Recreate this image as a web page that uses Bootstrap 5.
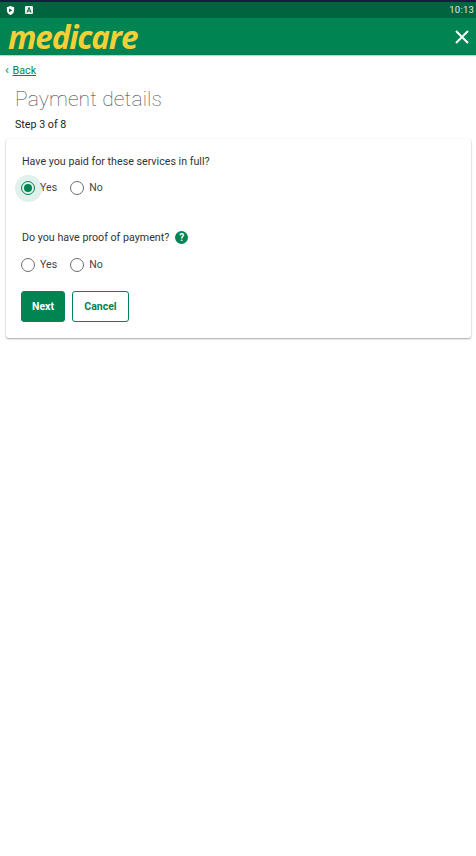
<!DOCTYPE html>
<html lang="en"><head><meta charset="utf-8">
<link rel="stylesheet" href="https://cdn.jsdelivr.net/npm/bootstrap@5.3.0/dist/css/bootstrap.min.css">
<style>
html,body{height:856px;overflow:hidden;background:#fff}
body{font-family:Roboto,sans-serif;font-size:10.7px;color:#2b2b2b;border-top:2px solid #1c1b3a}
.stat-bar{height:16px;background:#00643f;color:#dfeee8;padding:0 2px 0 6px;font-size:9.5px;letter-spacing:.2px}
.stat-a{margin-left:10px}
.app-head{height:37px;background:#008552;padding:0 6px 0 8px;box-shadow:0 1px 1px rgba(0,0,0,.2)}
.brand-word{font-family:"Open Sans",sans-serif;font-weight:700;font-style:italic;font-size:31.5px;line-height:37px;color:#f4cf37;letter-spacing:-1.2px}
.back-row{padding:8px 0 0 5px;height:30px;font-size:10.7px;line-height:15px;color:#008552}
.back-row a{color:#008552;margin-left:1px}
.back-mark{font-size:13px;line-height:13px}
.page-h{font-weight:100;font-size:21px;line-height:26px;color:#444;margin:1px 0 0 15px;letter-spacing:.15px}
.step-line{margin:6px 0 0 15px;font-size:10.7px;line-height:14px;color:#222}
.pay-card{margin:7px 5px 0 6px;height:199px;padding:16px 16px 0;border:0;border-radius:3px;box-shadow:0 1px 2px rgba(0,0,0,.35),0 0 2px rgba(0,0,0,.06)}
.q-line{line-height:14px;font-size:10.7px;color:#333}
.radio-row{gap:13px;margin-top:11px;height:16px;margin-left:-1px}
.radio-opt{gap:5px;color:#444;font-size:10.5px;line-height:16px;letter-spacing:.1px}
.radio-dot{width:14px;height:14px;border:1.3px solid #6d6d6d;border-radius:50%;position:relative;flex:none}
.radio-dot.on{border-color:#008552;border-width:1.5px}
.radio-dot.on::after{content:"";position:absolute;inset:2px;border-radius:50%;background:#008552}
.radio-dot.on::before{content:"";position:absolute;inset:-7.5px;border-radius:50%;background:rgba(0,133,82,.12)}
.help-dot{width:13px;height:13px;background:#008552;color:#fff;border-radius:50%;font-size:10px;font-weight:700;line-height:13px;text-align:center;margin:-1px 0 0 6px}
.q-two{margin-top:35px}
.radio-two{margin-top:12px}
.act-row{gap:7px;margin-top:18px;margin-left:-1px}
.act-btn{height:31px;font-size:10.5px;font-weight:700;border-radius:3px;padding:0;line-height:29px;border:1px solid #008552}
.act-btn.go{width:44px;background:#008552;color:#fff}
.act-btn.stop{width:57px;background:#fff;color:#008552}
</style></head><body>
<div class="stat-bar d-flex align-items-center justify-content-between">
<div class="d-flex align-items-center">
<svg width="9" height="11" viewBox="0 0 10 11"><path d="M5 .5 9 2v3.500c0 2.400-1.700 4-4 5-2.300-1-4-2.600-4-5V2z" fill="#fff"/><path d="M3.500 3.200 7 5.300 3.500 7.400z" fill="#00643f"/></svg>
<svg width="8" height="8" viewBox="0 0 8 8" class="stat-a"><rect width="8" height="8" rx="1" fill="#e8f1ed"/><path d="M2 6.500 4 1.500l2 5M2.800 5h2.400" fill="none" stroke="#00643f" stroke-width="1"/></svg>
</div>
<span>10:13</span>
</div>
<div class="app-head d-flex align-items-center justify-content-between">
<span class="brand-word">medicare</span>
<svg width="16" height="16" viewBox="0 0 16 16"><path d="M2 2 14 14M14 2 2 14" stroke="#fff" stroke-width="2" fill="none"/></svg>
</div>
<div class="back-row"><span class="back-mark">‹</span> <a href="#">Back</a></div>
<h1 class="page-h">Payment details</h1>
<p class="step-line">Step 3 of 8</p>
<div class="card pay-card">
<div class="q-line">Have you paid for these services in full?</div>
<div class="d-flex radio-row">
<div class="d-flex align-items-center radio-opt"><span class="radio-dot on"></span><span class="position-relative">Yes</span></div>
<div class="d-flex align-items-center radio-opt"><span class="radio-dot"></span><span>No</span></div>
</div>
<div class="d-flex align-items-center q-two"><span class="q-line">Do you have proof of payment?</span><span class="help-dot">?</span></div>
<div class="d-flex radio-row radio-two">
<div class="d-flex align-items-center radio-opt"><span class="radio-dot"></span><span>Yes</span></div>
<div class="d-flex align-items-center radio-opt"><span class="radio-dot"></span><span>No</span></div>
</div>
<div class="d-flex act-row">
<button type="button" class="btn act-btn go">Next</button>
<button type="button" class="btn act-btn stop">Cancel</button>
</div>
</div>
</body></html>
